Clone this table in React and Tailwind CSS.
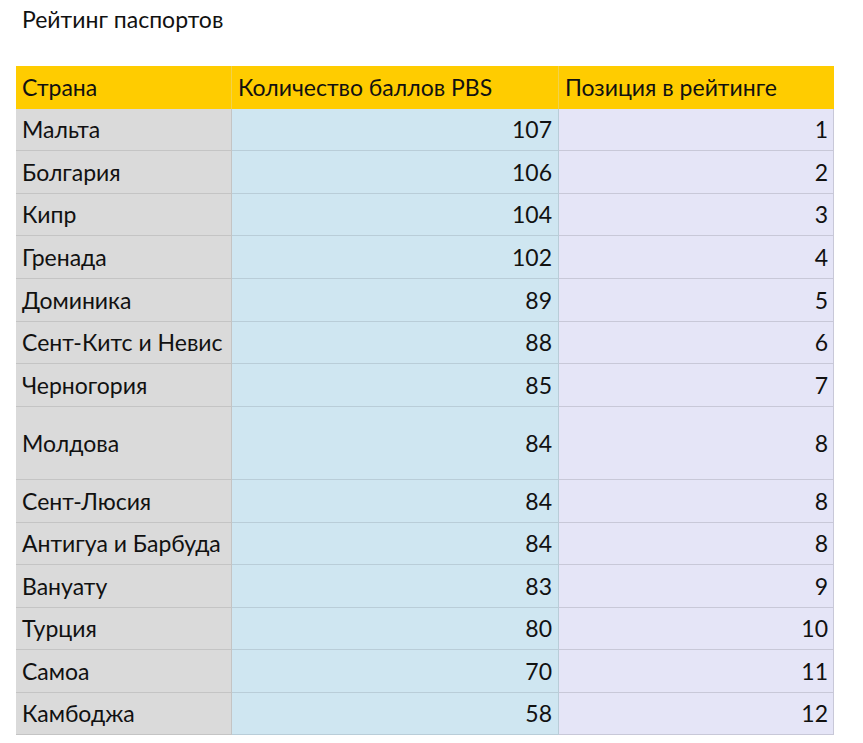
import React from "react";

const rows = [
  ["Мальта", 107, 1, "h-[42px]"],
  ["Болгария", 106, 2, "h-[43px]"],
  ["Кипр", 104, 3, "h-[42px]"],
  ["Гренада", 102, 4, "h-[43px]"],
  ["Доминика", 89, 5, "h-[43px]"],
  ["Сент-Китс и Невис", 88, 6, "h-[42px]"],
  ["Черногория", 85, 7, "h-[43px]"],
  ["Молдова", 84, 8, "h-[73px]"],
  ["Сент-Люсия", 84, 8, "h-[43px]"],
  ["Антигуа и Барбуда", 84, 8, "h-[42px]"],
  ["Вануату", 83, 9, "h-[43px]"],
  ["Турция", 80, 10, "h-[42px]"],
  ["Самоа", 70, 11, "h-[43px]"],
  ["Камбоджа", 58, 12, "h-[42px]"],
];

export default function App() {
  return (
    <div className="w-[863px] h-[743px] bg-white text-[#111] overflow-hidden" style={{ fontFamily: "Lato, 'Liberation Sans', sans-serif" }}>
      <div className="pl-[22px] pt-[5px] h-[66px] text-[23px] leading-[28px]">Рейтинг паспортов</div>
      <div className="ml-[16px] w-[818px] text-[23px]">
        <div className="grid grid-cols-[216px_327px_275px] h-[43px] bg-[#ffcc00]">
          <div className="flex items-center pl-[6px] border-r border-[#f2d24a]">Страна</div>
          <div className="flex items-center pl-[6px] border-r border-[#f2d24a]">Количество баллов PBS</div>
          <div className="flex items-center pl-[6px]">Позиция в рейтинге</div>
        </div>
        {rows.map(([c, s, p, h]) => (
          <div key={c} className={`grid grid-cols-[216px_327px_275px] ${h}`}>
            <div className="flex items-center pl-[6px] bg-[#dadada] border-b border-r border-[#c4c4c4]">{c}</div>
            <div className="flex items-center justify-end pr-[6px] bg-[#cfe6f1] border-b border-r border-[#b9cdd8]">{s}</div>
            <div className="flex items-center justify-end pr-[5px] bg-[#e5e5f7] border-b border-r border-[#c8c8d8]">{p}</div>
          </div>
        ))}
      </div>
    </div>
  );
}
